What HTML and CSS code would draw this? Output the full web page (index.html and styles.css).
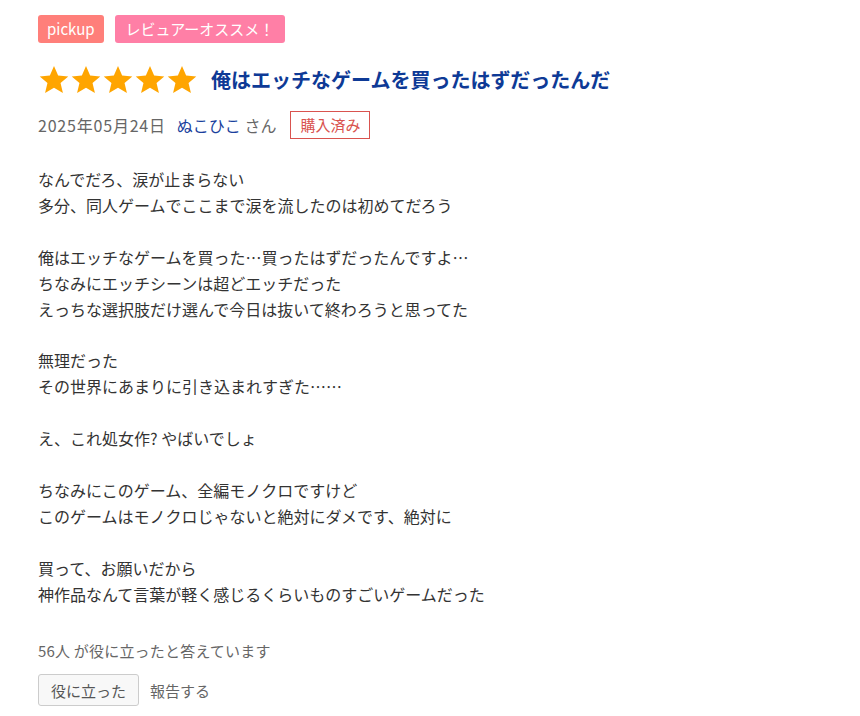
FILE: index.html
```html
<!DOCTYPE html>
<html lang="ja">
<head>
<meta charset="utf-8">
<link rel="stylesheet" href="styles.css">
</head>
<body>
<div class="review">
  <div class="tags">
    <span class="tag tag-pickup">pickup</span>
    <span class="tag tag-rec">レビュアーオススメ！</span>
  </div>
  <div class="title-row">
    <div class="stars">
      <svg viewBox="0 0 24 24" class="star"><path d="M12 1.5l3.1 7.2 7.6.6-5.8 5 1.8 7.5L12 17.8 5.3 21.8l1.8-7.5-5.8-5 7.6-.6z"/></svg>
      <svg viewBox="0 0 24 24" class="star"><path d="M12 1.5l3.1 7.2 7.6.6-5.8 5 1.8 7.5L12 17.8 5.3 21.8l1.8-7.5-5.8-5 7.6-.6z"/></svg>
      <svg viewBox="0 0 24 24" class="star"><path d="M12 1.5l3.1 7.2 7.6.6-5.8 5 1.8 7.5L12 17.8 5.3 21.8l1.8-7.5-5.8-5 7.6-.6z"/></svg>
      <svg viewBox="0 0 24 24" class="star"><path d="M12 1.5l3.1 7.2 7.6.6-5.8 5 1.8 7.5L12 17.8 5.3 21.8l1.8-7.5-5.8-5 7.6-.6z"/></svg>
      <svg viewBox="0 0 24 24" class="star"><path d="M12 1.5l3.1 7.2 7.6.6-5.8 5 1.8 7.5L12 17.8 5.3 21.8l1.8-7.5-5.8-5 7.6-.6z"/></svg>
    </div>
    <h2 class="title">俺はエッチなゲームを買ったはずだったんだ</h2>
  </div>
  <div class="meta">
    <span class="date">2025年05月24日</span>
    <span class="author"><a class="name">ぬこひこ</a> さん</span>
    <span class="bought">購入済み</span>
  </div>
  <p class="body">なんでだろ、涙が止まらない<br>多分、同人ゲームでここまで涙を流したのは初めてだろう<br><br>俺はエッチなゲームを買った…買ったはずだったんですよ…<br>ちなみにエッチシーンは超どエッチだった<br>えっちな選択肢だけ選んで今日は抜いて終わろうと思ってた<br><br>無理だった<br>その世界にあまりに引き込まれすぎた……<br><br>え、これ処女作? やばいでしょ<br><br>ちなみにこのゲーム、全編モノクロですけど<br>このゲームはモノクロじゃないと絶対にダメです、絶対に<br><br>買って、お願いだから<br>神作品なんて言葉が軽く感じるくらいものすごいゲームだった</p>
  <div class="helpful-count">56人 が役に立ったと答えています</div>
  <div class="actions">
    <button class="btn">役に立った</button>
    <a class="report">報告する</a>
  </div>
</div>
</body>
</html>
```
FILE: styles.css
```css
html, body { margin: 0; padding: 0; background: #fff; }
body {
  font-family: "Noto Sans CJK JP", "Noto Sans", sans-serif;
  color: #333;
}
.review { padding: 15px 38px 0; }
.tags { display: flex; gap: 11px; }
.tag {
  display: inline-block;
  color: #fff;
  font-size: 15px;
  line-height: 28px;
  height: 28px;
  padding: 0 9px;
  border-radius: 3px;
}
.tag-pickup { background: #ff7f7a; }
.tag-rec { background: #ff7fa6; padding: 0 11px; }
.title-row { display: flex; align-items: center; margin-top: 21px; height: 32px; }
.stars { display: flex; gap: 0; margin-right: 13px; }
.star { width: 32px; height: 32px; fill: #ffa500; }
.title {
  margin: 0;
  font-size: 20px;
  font-weight: bold;
  color: #0e3a96;
  line-height: 32px;
}
.meta {
  display: flex;
  align-items: center;
  margin-top: 15px;
  font-size: 16px;
  color: #666;
  height: 28px;
}
.date { margin-right: 11px; letter-spacing: 0.8px; }
.name { color: #1a3f9d; }
.author { margin-right: 14px; }
.bought {
  border: 1px solid #d9534f;
  color: #d9534f;
  font-size: 15px;
  line-height: 26px;
  padding: 0 9px;
}
.body {
  margin: 28px 0 0;
  font-size: 16px;
  line-height: 25.9px;
  color: #333;
}
.helpful-count {
  margin-top: 33px;
  font-size: 15px;
  color: #666;
  line-height: 22px;
  letter-spacing: 0.2px;
}
.actions { display: flex; align-items: center; margin-top: 12px; gap: 11px; }
.btn {
  font-family: inherit;
  font-size: 15px;
  color: #555;
  background: #f8f8f8;
  border: 1px solid #ccc;
  border-radius: 3px;
  height: 32px;
  padding: 0 12px;
}
.report { font-size: 15px; color: #666; }
```
